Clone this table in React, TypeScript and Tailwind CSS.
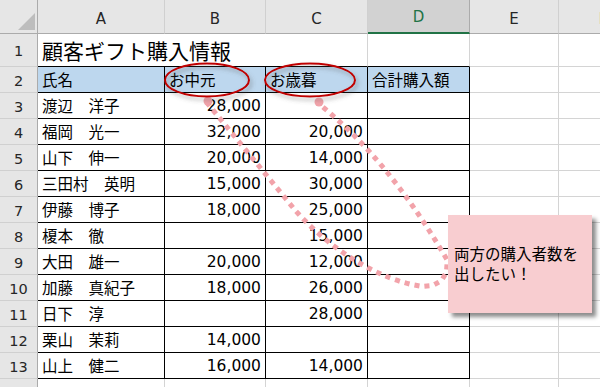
import React from "react";

const GRID = "grid grid-cols-[38px_127px_101px_102px_102px_89px_89px]";

type Row = { no: number; name: string; b: string; c: string };

const rows: Row[] = [
  { no: 3, name: "渡辺　洋子", b: "28,000", c: "" },
  { no: 4, name: "福岡　光一", b: "32,000", c: "20,000" },
  { no: 5, name: "山下　伸一", b: "20,000", c: "14,000" },
  { no: 6, name: "三田村　英明", b: "15,000", c: "30,000" },
  { no: 7, name: "伊藤　博子", b: "18,000", c: "25,000" },
  { no: 8, name: "榎本　徹", b: "", c: "15,000" },
  { no: 9, name: "大田　雄一", b: "20,000", c: "12,000" },
  { no: 10, name: "加藤　真紀子", b: "18,000", c: "26,000" },
  { no: 11, name: "日下　淳", b: "", c: "28,000" },
  { no: 12, name: "栗山　茉莉", b: "14,000", c: "" },
  { no: 13, name: "山上　健二", b: "16,000", c: "14,000" },
];

function RowHead({ n }: { n: number }) {
  return (
    <div className="flex items-center justify-center bg-[#e6e6e6] border-r border-b border-r-[#ababab] border-b-[#d0d0d0] font-['DejaVu_Sans',sans-serif] text-[14.5px] leading-none text-[#262626] pt-[3px]">
      {n}
    </div>
  );
}

function ColHead({ label, active }: { label: string; active?: boolean }) {
  return active ? (
    <div className="flex items-end justify-center pb-[7px] bg-[#d2d2d2] border-r border-[#ababab] border-b-2 border-b-[#217346] font-['DejaVu_Sans',sans-serif] text-[15px] leading-none text-[#217346]">
      {label}
    </div>
  ) : (
    <div className="flex items-end justify-center pb-[6px] bg-[#e6e6e6] border-r border-b border-r-[#d0d0d0] border-b-[#ababab] font-['DejaVu_Sans',sans-serif] text-[15px] leading-none text-[#262626]">
      {label}
    </div>
  );
}

function Num({ v }: { v: string }) {
  return (
    <div className="flex items-center justify-end pr-[4px] border-r border-b border-black font-['DejaVu_Sans',sans-serif] text-[15.5px] leading-none pt-[2px]">
      {v}
    </div>
  );
}

function Plain() {
  return <div className="border-r border-b border-[#d4d4d4]" />;
}

export default function App() {
  return (
    <div className="relative w-[600px] h-[387px] overflow-hidden bg-white text-black font-['Noto_Sans_CJK_JP',sans-serif]">
      {/* column headers */}
      <div className={`${GRID} h-[34px]`}>
        <div className="relative bg-[#e6e6e6] border-r border-b border-r-[#ababab] border-b-[#ababab]">
          <svg className="absolute left-0 top-0" width="38" height="34" viewBox="0 0 38 34">
            <polygon points="18,30 35,13 35,30" fill="#bdbdbd" />
          </svg>
        </div>
        <ColHead label="A" />
        <ColHead label="B" />
        <ColHead label="C" />
        <ColHead label="D" active />
        <ColHead label="E" />
        <ColHead label="F" />
      </div>

      {/* row 1: title */}
      <div className={`${GRID} h-[33px]`}>
        <RowHead n={1} />
        <div className="flex items-center pl-[4px] border-b border-black whitespace-nowrap text-[21px] leading-none pt-[1px]">
          顧客ギフト購入情報
        </div>
        <div className="border-b border-black" />
        <div className="border-b border-b-black border-r border-r-[#d4d4d4]" />
        <div className="border-b border-b-black border-r border-r-[#d4d4d4]" />
        <Plain />
        <Plain />
      </div>

      {/* row 2: headings */}
      <div className={`${GRID} h-[26px]`}>
        <RowHead n={2} />
        {["氏名", "お中元", "お歳暮", "合計購入額"].map((t) => (
          <div
            key={t}
            className="flex items-center pl-[4px] bg-[#bdd7ee] border-r border-b border-black text-[15.5px] leading-none"
          >
            {t}
          </div>
        ))}
        <Plain />
        <Plain />
      </div>

      {/* data rows */}
      {rows.map((r) => (
        <div key={r.no} className={`${GRID} h-[26px]`}>
          <RowHead n={r.no} />
          <div className="flex items-center pl-[4px] border-r border-b border-black text-[15.5px] leading-none whitespace-nowrap">
            {r.name}
          </div>
          <Num v={r.b} />
          <Num v={r.c} />
          <div className="border-r border-b border-black" />
          <Plain />
          <Plain />
        </div>
      ))}

      {/* row 14 */}
      <div className={`${GRID} h-[26px]`}>
        <RowHead n={14} />
        <Plain />
        <Plain />
        <Plain />
        <Plain />
        <Plain />
        <Plain />
      </div>

      {/* callout line and circled headings */}
      <svg
        className="absolute left-0 top-0 pointer-events-none"
        width="600"
        height="387"
        viewBox="0 0 600 387"
      >
        <defs>
          <filter id="soft" x="-20%" y="-30%" width="140%" height="170%">
            <feDropShadow dx="2" dy="3" stdDeviation="2" floodColor="#555" floodOpacity="0.5" />
          </filter>
        </defs>
        <path
          d="M 208 104 L 295 210 C 330 250 380 280 420 286 C 440 288 450 275 446 258 Q 388 159 319 104"
          fill="none"
          stroke="#f2a3aa"
          strokeWidth="5"
          strokeDasharray="0.1 10"
          strokeLinecap="square"
        />
        <circle cx="208" cy="101" r="4.5" fill="#f2a3aa" />
        <circle cx="319" cy="102" r="4.5" fill="#f2a3aa" />
        <g filter="url(#soft)">
          <ellipse cx="207" cy="80" rx="42" ry="16.5" fill="none" stroke="#c00000" strokeWidth="2" />
          <ellipse cx="310" cy="80" rx="45" ry="16.5" fill="none" stroke="#c00000" strokeWidth="2" />
        </g>
      </svg>

      {/* callout box */}
      <div className="absolute left-[448px] top-[215px] w-[144px] h-[98px] flex items-center pl-[6px] bg-[#f8cdd0] shadow-[4px_4px_4px_rgba(0,0,0,0.45)] text-[15.5px] leading-[20px] pb-[2px]">
        <div>
          両方の購入者数を
          <br />
          出したい！
        </div>
      </div>
    </div>
  );
}
